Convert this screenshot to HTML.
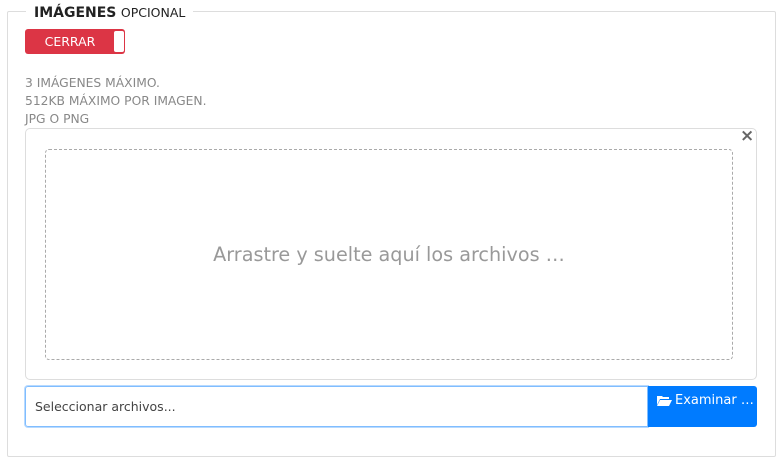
<!DOCTYPE html><html><head><style>
body{margin:0;width:784px;height:465px;background:#fff;font-family:"DejaVu Sans","Liberation Sans",sans-serif;position:relative;overflow:hidden}
.a{position:absolute}
</style></head><body>
<div class="a" style="left:7px;top:11px;width:767px;height:444px;border:1px solid #ddd;border-radius:2px"></div>
<div class="a" style="left:26px;top:3px;padding:0 8px;background:#fff;font-size:14px;color:#222;line-height:19px"><b>IMÁGENES</b> <span style="font-size:12.5px">OPCIONAL</span></div>
<div class="a" style="left:25px;top:29px;width:100px;height:25px;background:#dc3545;border-radius:3px"></div>
<div class="a" style="left:114px;top:31px;width:10px;height:21px;background:#fff;border-radius:2px"></div>
<div class="a" style="left:25px;top:29px;width:90px;height:25px;line-height:26px;text-align:center;color:#fff;font-size:12.5px">CERRAR</div>
<div class="a" style="left:25px;top:74px;font-size:12.3px;line-height:18px;color:#888">3 IMÁGENES MÁXIMO.<br>512KB MÁXIMO POR IMAGEN.<br>JPG O PNG</div>
<div class="a" style="left:25px;top:128px;width:730px;height:250px;border:1px solid #ddd;border-radius:5px"></div>
<div class="a" style="left:740px;top:126px;font-size:17px;color:#666;font-weight:bold">×</div>
<div class="a" style="left:45px;top:149px;width:686px;height:209px;border:1px dashed #aaa;border-radius:4px"></div>
<div class="a" style="left:45px;top:243px;width:688px;text-align:center;font-size:19.2px;color:#999">Arrastre y suelte aquí los archivos …</div>
<div class="a" style="left:25px;top:386px;width:621px;height:39px;border:1px solid #80bdff;box-shadow:0 0 0 1px #b8daff;border-radius:3px 0 0 3px"></div>
<div class="a" style="left:35px;top:399px;font-size:12.5px;color:#444">Seleccionar archivos...</div>
<div class="a" style="left:648px;top:386px;width:109px;height:41px;background:#007bff;border-radius:0 3px 3px 0;color:#fff;font-size:13px;line-height:30px"><svg style="position:absolute;left:9px;top:9px" width="15" height="12" viewBox="0 0 15 12"><path d="M0 1h5l1 1h6v2H3L0 10z" fill="#fff"/><path d="M3 5h12l-3 6H0z" fill="#fff"/></svg><span style="position:absolute;left:27px;top:0">Examinar …</span></div>
</body></html>
